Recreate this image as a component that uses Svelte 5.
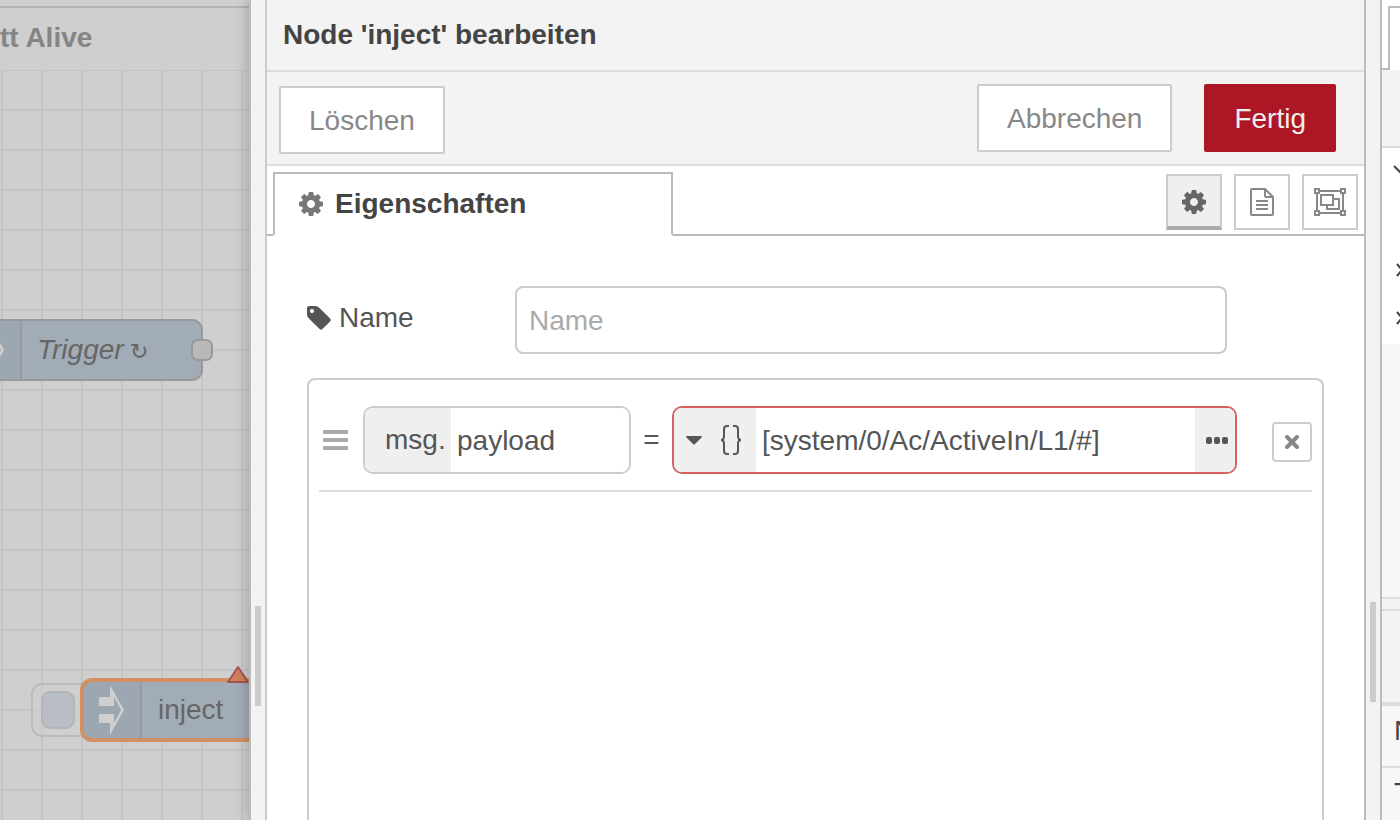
<script lang="ts">
    let name = "";
    let property = "payload";
    let value = "[system/0/Ac/ActiveIn/L1/#]";

    const cog = "M1152 896q0-106-75-181t-181-75-181 75-75 181 75 181 181 75 181-75 75-181zm512-109v222q0 12-8 23t-20 13l-185 28q-19 54-39 91 35 50 107 138 10 12 10 25t-9 23q-27 37-99 108t-94 71q-12 0-26-9l-138-108q-44 23-91 38-16 136-29 186-7 28-36 28h-222q-14 0-24.500-8.500t-11.500-21.500l-28-184q-49-16-90-37l-141 107q-10 9-25 9-14 0-25-11-126-114-165-168-7-10-7-23 0-12 8-23 15-21 51-66.500t54-70.500q-27-50-41-99l-183-27q-13-2-21-12.500t-8-23.500v-222q0-12 8-23t19-13l186-28q14-46 39-92-40-57-107-138-10-12-10-24 0-10 9-23 26-36 98.500-107.500t94.500-71.500q13 0 26 10l138 107q44-23 91-38 16-136 29-186 7-28 36-28h222q14 0 24.500 8.500t11.500 21.500l28 184q49 16 90 37l142-107q9-9 24-9 13 0 25 10 129 119 165 170 7 8 7 22 0 12-8 23-15 21-51 66.500t-54 70.500q26 50 41 98l183 28q13 2 21 12.500t8 23.500z";
    const tag = "M576 448q0-53-37.500-90.500t-90.500-37.500-90.500 37.500-37.500 90.500 37.500 90.500 90.500 37.500 90.500-37.500 37.500-90.500zm1067 576q0 53-37 90l-491 492q-39 37-91 37-53 0-90-37l-715-716q-38-37-64.500-101t-26.500-117v-416q0-52 38-90t90-38h416q53 0 117 26.500t102 64.500l715 714q37 39 37 91z";
    const arrow = "M0 12H11V0L25 25L11 50V38H0V29H15V38L22 25L15 12V21H0Z";
</script>

<div class="editor">
    <section class="workspace">
        <div class="flow-tabs"><span class="flow-tab">tt Alive</span></div>
        <svg class="canvas" role="img" aria-label="Flow">
            <defs>
                <pattern id="grid" width="40" height="40" x="2" patternUnits="userSpaceOnUse">
                    <path d="M0 0H40M0 40H40M0 0V40M40 0V40" stroke="#c4c4c4" stroke-width="2" />
                </pattern>
            </defs>
            <rect width="100%" height="100%" fill="url(#grid)" />

            <g transform="translate(-38 250)">
                <rect width="240" height="60" rx="10" fill="#a2acb6" />
                <path d="M0 0H59V60H0Z" fill="#9da7b1" />
                <path d="M59 0V60" stroke="#939ba4" stroke-width="2" />
                <rect width="240" height="60" rx="10" fill="none" stroke="#999" stroke-width="2" />
                <path d={arrow} transform="translate(17 5)" fill="#cfcfcf" />
                <text class="italic" x="75" y="39">Trigger</text>
                <text class="repeat" x="168" y="39">↻</text>
                <rect x="230" y="20" width="20" height="20" rx="6" fill="#b9b9b9" stroke="#999" stroke-width="2" />
            </g>

            <g transform="translate(82 610)">
                <rect x="-50" y="4" width="64" height="52" rx="10" fill="#cfcfcf" fill-opacity="0.6" stroke="#bbb" stroke-width="2" />
                <rect x="-40" y="12" width="32" height="36" rx="8" fill="#b9bec4" stroke="#b3b5b9" stroke-width="2" />
                <rect width="240" height="60" rx="10" fill="#a2acb6" />
                <path d="M59 0H10A10 10 0 0 0 0 10V50A10 10 0 0 0 10 60H59Z" fill="#9da7b1" />
                <path d="M59 0V60" stroke="#939ba4" stroke-width="2" />
                <rect width="240" height="60" rx="10" fill="none" stroke="#d28f61" stroke-width="4" />
                <path d={arrow} transform="translate(17 5)" fill="#cfcfcf" />
                <text x="76" y="39">inject</text>
                <path d="M156 -13L166 2H146Z" fill="#d0815a" stroke="#a05553" stroke-width="2" stroke-linejoin="round" />
            </g>
        </svg>
    </section>

    <div class="separator left"><i></i></div>

    <main class="tray">
        <h1>Node 'inject' bearbeiten</h1>
        <div class="toolbar">
            <button class="btn delete">Löschen</button>
            <div class="toolbar-right">
                <button class="btn">Abbrechen</button>
                <button class="btn primary">Fertig</button>
            </div>
        </div>

        <div class="tabs">
            <a class="tab" href="#properties">
                <svg width="24" height="24" viewBox="128 128 1536 1536" fill="#777"><path d={cog} /></svg>
                Eigenschaften
            </a>
            <div class="tab-buttons">
                <button class="active" aria-label="Eigenschaften">
                    <svg width="24" height="24" viewBox="128 128 1536 1536" fill="#666"><path d={cog} /></svg>
                </button>
                <button aria-label="Beschreibung">
                    <svg width="24" height="28" viewBox="0 0 24 28" fill="none" stroke="#888" stroke-width="2">
                        <path d="M2 1H15L23 9V26Q23 27 22 27H2Q1 27 1 26V2Q1 1 2 1Z" />
                        <path d="M15 1V8Q15 9 16 9H23" />
                        <path d="M6 13H18M6 17H18M6 21H18" />
                    </svg>
                </button>
                <button aria-label="Erscheinungsbild">
                    <svg width="32" height="28" viewBox="0 0 32 28" fill="none" stroke="#888" stroke-width="2">
                        <path d="M5 3H27M5 25H27M3 5V23M29 5V23" />
                        <path d="M1 1H5V5H1ZM27 1H31V5H27ZM1 23H5V27H1ZM27 23H31V27H27Z" />
                        <path d="M7 7H19V17H7ZM19 11H25V21H13V17" />
                    </svg>
                </button>
            </div>
        </div>

        <form class="form" on:submit|preventDefault>
            <div class="form-row">
                <label for="node-name">
                    <svg width="24" height="24" viewBox="128 128 1536 1536" fill="#555"><path d={tag} /></svg>
                    Name
                </label>
                <input id="node-name" class="name" type="text" placeholder="Name" bind:value={name} />
            </div>

            <div class="rules">
                <div class="rule">
                    <svg class="handle" width="25" height="20" fill="#aaa">
                        <rect width="25" height="4" rx="1" />
                        <rect y="8" width="25" height="4" rx="1" />
                        <rect y="16" width="25" height="4" rx="1" />
                    </svg>
                    <div class="typed property">
                        <span class="prefix">msg.</span>
                        <input type="text" aria-label="Eigenschaft" bind:value={property} />
                    </div>
                    <span class="equals">=</span>
                    <div class="typed value">
                        <button class="type" type="button" aria-label="JSON">
                            <svg width="16" height="9" fill="#555"><path d="M1 0H15Q17 0 15 2L9 8Q8 9 7 8L1 2Q-1 0 1 0Z" /></svg>
                            <svg width="22" height="30" viewBox="0 0 22 30" fill="none" stroke="#555" stroke-width="2">
                                <path d="M9 1H7Q4 1 4 4V11Q4 15 1 15Q4 15 4 19V26Q4 29 7 29H9" />
                                <path d="M13 1H15Q18 1 18 4V11Q18 15 21 15Q18 15 18 19V26Q18 29 15 29H13" />
                            </svg>
                        </button>
                        <input type="text" aria-label="Wert" bind:value={value} />
                        <button class="expand" type="button" aria-label="Erweitern">
                            <svg width="22" height="7" fill="#555">
                                <rect width="6" height="7" rx="2" />
                                <rect x="8" width="6" height="7" rx="2" />
                                <rect x="16" width="6" height="7" rx="2" />
                            </svg>
                        </button>
                    </div>
                    <button class="remove" type="button" aria-label="Entfernen">
                        <svg width="14" height="14" stroke="#888" stroke-width="4" stroke-linecap="round"><path d="M2 2L12 12M12 2L2 12" /></svg>
                    </button>
                </div>
            </div>
        </form>
    </main>

    <div class="separator right"><i></i></div>

    <aside class="sidebar">
        <div class="side-tabs">
            <div class="side-edge"></div>
            <div class="side-tab"></div>
        </div>
        <div class="side-toolbar"></div>
        <div class="outline">
            <svg width="18" height="196" fill="none" stroke="#444" stroke-width="2">
                <path d="M12 20L19 27L26 20M15 118L20 124L15 130M15 166L20 172L15 178" />
            </svg>
        </div>
        <div class="side-space"></div>
        <div class="side-gap"></div>
        <div class="side-header"></div>
        <div class="side-row">N</div>
        <div class="side-row">T</div>
    </aside>
</div>

<style>
    :global(body) {
        overflow: hidden;
    }

    .editor {
        display: flex;
        height: 100vh;
        overflow: hidden;
        font-family: "Helvetica Neue", "Liberation Sans", Arial, sans-serif;
        font-size: 28px;
        color: #555;
        background: #fff;
    }

    .editor * {
        box-sizing: border-box;
    }

    button, input {
        font: inherit;
        color: inherit;
        margin: 0;
    }

    svg {
        display: block;
        flex-shrink: 0;
    }

    .workspace {
        flex: 0 0 249px;
        display: flex;
        flex-direction: column;
        overflow: hidden;
        background: #cfcfcf;
    }

    .flow-tabs {
        flex: 0 0 64px;
        margin-top: 6px;
        border-top: 2px solid #b4b4b4;
        line-height: 60px;
        font-weight: bold;
        color: #858585;
        white-space: nowrap;
    }

    .canvas {
        flex: 1;
        width: 100%;
    }

    .canvas text {
        font-size: 28px;
        fill: #666;
    }

    .canvas .italic {
        font-style: italic;
    }

    .canvas .repeat {
        font-family: "DejaVu Sans", sans-serif;
        font-size: 22px;
    }

    .separator {
        position: relative;
        z-index: 1;
        background: #f3f3f3;
        border: 2px solid #bbb;
        border-width: 0 2px;
        padding: 602px 4px 0;
        flex: 0 0 18px;
    }

    .separator.left {
        padding-top: 606px;
        border-right-color: #ccc;
        box-shadow: -2px 0 14px rgba(0, 0, 0, 0.18), 0 0 8px rgba(0, 0, 0, 0.04);
        clip-path: inset(0 -4px 0 -20px);
    }

    .separator i {
        display: block;
        width: 6px;
        height: 100px;
        background: #ccc;
    }

    .tray {
        flex: 1;
        min-width: 0;
        display: flex;
        flex-direction: column;
        background: #fff;
        position: relative;
        z-index: 2;
    }

    h1 {
        flex: 0 0 72px;
        margin: 0;
        padding-left: 16px;
        border-bottom: 2px solid #ddd;
        background: #f3f3f3;
        font-size: 28px;
        line-height: 70px;
        color: #444;
    }

    .toolbar {
        flex: 0 0 94px;
        display: flex;
        justify-content: space-between;
        padding: 12px 28px 10px 12px;
        border-bottom: 2px solid #ddd;
        background: #f3f3f3;
    }

    .toolbar-right {
        display: flex;
        align-items: flex-start;
        gap: 32px;
    }

    .btn {
        height: 68px;
        padding: 2px 28px 0;
        border: 2px solid #ccc;
        border-radius: 2px;
        background: #fff;
        color: #888;
    }

    .btn.delete {
        align-self: flex-end;
    }

    .btn.primary {
        border-color: #ad1625;
        background: #ad1625;
        color: #eee;
    }

    .tabs {
        flex: 0 0 70px;
        display: flex;
        justify-content: space-between;
        padding: 6px 6px 0;
        border-bottom: 2px solid #bbb;
    }

    .tab {
        width: 400px;
        margin-bottom: -2px;
        padding: 0 24px;
        display: flex;
        align-items: center;
        gap: 12px;
        border: 2px solid #bbb;
        border-bottom-color: #fff;
        background: #fff;
        color: #444;
        font-weight: bold;
        text-decoration: none;
    }

    .tab-buttons {
        display: flex;
        gap: 12px;
        padding-top: 2px;
    }

    .tab-buttons button {
        width: 56px;
        height: 56px;
        display: flex;
        align-items: center;
        justify-content: center;
        padding: 0;
        border: 2px solid #ccc;
        background: #fff;
    }

    .tab-buttons .active {
        padding-top: 2px;
        border-bottom: 4px solid #aaa;
        background: #efefef;
    }

    .form {
        flex: 1;
        min-height: 0;
        display: flex;
        flex-direction: column;
        gap: 24px;
        padding: 50px 40px 0;
    }

    .form-row {
        display: flex;
        justify-content: flex-start;
    }

    label {
        width: 208px;
        height: 64px;
        display: flex;
        align-items: center;
        gap: 8px;
    }

    input {
        border: none;
        outline: none;
        background: #fff;
    }

    input::placeholder {
        color: #aaa;
        opacity: 1;
    }

    .name {
        width: 70%;
        height: 68px;
        padding: 2px 12px 0;
        border: 2px solid #ccc;
        border-radius: 8px;
    }

    .rules {
        flex: 1;
        padding: 10px;
        border: 2px solid #ccc;
        border-bottom: none;
        border-radius: 8px 8px 0 0;
    }

    .rule {
        display: flex;
        align-items: center;
        padding: 16px 0 16px 4px;
        border-bottom: 2px solid #ddd;
    }

    .handle {
        margin-right: 15px;
    }

    .typed {
        display: flex;
        height: 68px;
        border: 2px solid #ccc;
        border-radius: 10px;
        overflow: hidden;
    }

    .typed input {
        flex: 1;
        min-width: 0;
        padding: 2px 6px 0;
    }

    .property {
        width: 268px;
    }

    .prefix {
        width: 86px;
        padding-left: 20px;
        background: #efefef;
        line-height: 64px;
    }

    .equals {
        width: 41px;
        text-align: center;
    }

    .value {
        flex: 1;
        border-color: #d6615f;
    }

    .typed button {
        display: flex;
        align-items: center;
        padding: 0;
        border: none;
        background: #efefef;
    }

    .typed .type {
        width: 82px;
        padding-left: 12px;
        gap: 18px;
    }

    .typed .expand {
        width: 40px;
        justify-content: flex-end;
        padding-right: 7px;
    }

    .remove {
        width: 40px;
        height: 40px;
        margin: 4px 0 0 35px;
        display: flex;
        align-items: center;
        justify-content: center;
        padding: 0;
        border: 2px solid #ccc;
        border-radius: 4px;
        background: #fff;
    }

    .sidebar {
        flex: 0 0 18px;
        display: flex;
        flex-direction: column;
        overflow: hidden;
        background: #f7f7f7;
        color: #444;
    }

    .side-tabs {
        flex: 0 0 70px;
        display: flex;
        padding-top: 6px;
        background: #fff;
    }

    .side-edge {
        width: 6px;
        border-bottom: 2px solid #bbb;
    }

    .side-tab {
        flex: 1;
        border: 2px solid #bbb;
        border-width: 2px 0 0 2px;
    }

    .side-toolbar {
        flex: 0 0 78px;
        border-bottom: 2px solid #ddd;
        background: #f3f3f3;
    }

    .outline {
        flex: 0 0 196px;
        background: #fff;
    }

    .outline svg {
        margin-top: -2px;
    }

    .side-space {
        flex: 0 0 255px;
        border-bottom: 2px solid #ddd;
    }

    .side-gap {
        flex: 0 0 12px;
        border-bottom: 2px solid #ddd;
        background: #f3f3f3;
    }

    .side-header {
        flex: 0 0 95px;
        border-bottom: 4px solid #ddd;
        background: #f3f3f3;
    }

    .side-row {
        flex: 0 0 62px;
        padding-left: 12px;
        border-bottom: 2px solid #ddd;
        line-height: 50px;
    }
</style>
